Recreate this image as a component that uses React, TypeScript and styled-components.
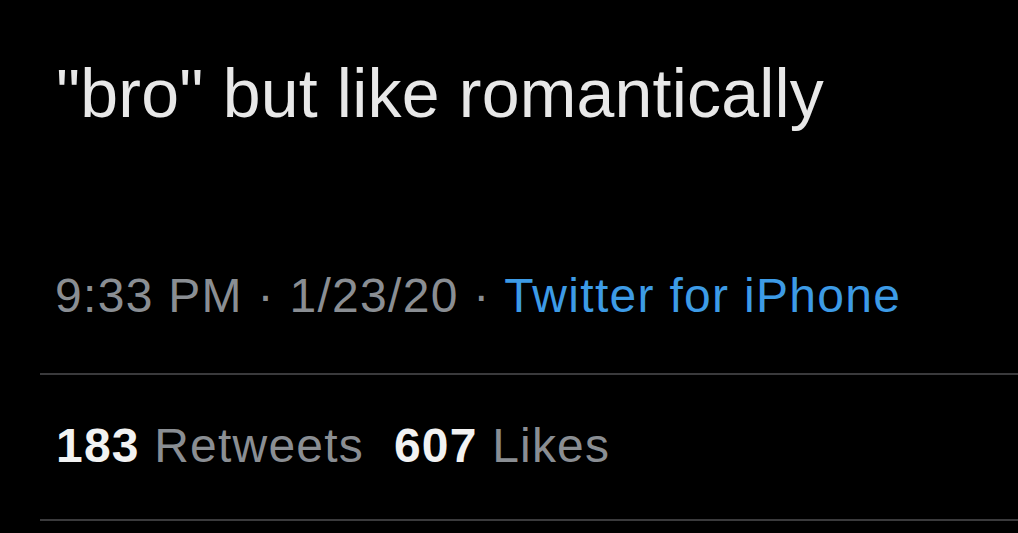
import React from 'react';
import styled, { createGlobalStyle } from 'styled-components';

const GlobalStyle = createGlobalStyle`
  html, body {
    margin: 0;
    padding: 0;
    background: #000;
  }
  body {
    font-family: 'Liberation Sans', Arial, sans-serif;
  }
`;

const Page = styled.div`
  width: 1018px;
  height: 533px;
  overflow: hidden;
  background: #000;
  padding: 59px 0 0 40px;
  box-sizing: border-box;
`;

const TweetText = styled.div`
  margin-left: 16px;
  font-size: 68px;
  line-height: 1;
  color: #e8e8e8;
  letter-spacing: 0.2px;
  white-space: nowrap;
`;

const Meta = styled.div`
  margin: 145px 0 0 15px;
  font-size: 48px;
  line-height: 1;
  letter-spacing: 1.3px;
  color: #8a8e93;
  white-space: nowrap;
`;

const Source = styled.span`
  color: #3d9be6;
`;

const Divider = styled.div<{ gap: number }>`
  margin-top: ${p => p.gap}px;
  height: 2px;
  background: #3a3a3c;
`;

const Stats = styled.div`
  margin: 47px 0 0 16px;
  display: flex;
  gap: 30px;
  font-size: 48px;
  line-height: 1;
  letter-spacing: 1.2px;
  white-space: nowrap;
`;

const Stat = styled.span`
  color: #8a8e93;
`;

const Count = styled.b`
  color: #f2f2f2;
  font-weight: 700;
`;

const App: React.FC = () => (
  <>
    <GlobalStyle />
    <Page>
      <TweetText>"bro" but like romantically</TweetText>
      <Meta>
        9:33 PM · 1/23/20 · <Source>Twitter for iPhone</Source>
      </Meta>
      <Divider gap={53} />
      <Stats>
        <Stat>
          <Count>183</Count> Retweets
        </Stat>
        <Stat>
          <Count>607</Count> Likes
        </Stat>
      </Stats>
      <Divider gap={49} />
    </Page>
  </>
);

export default App;
